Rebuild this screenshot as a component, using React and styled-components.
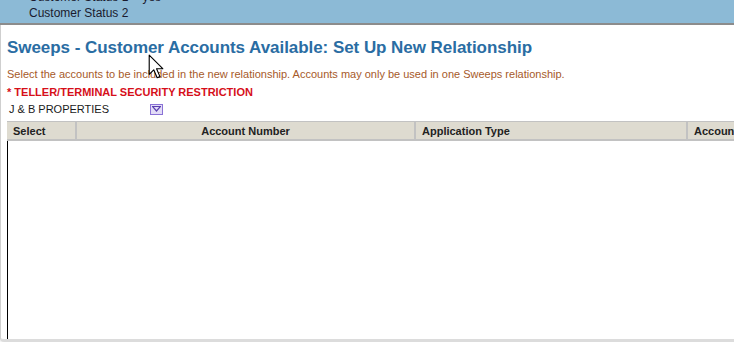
import styled, { createGlobalStyle } from 'styled-components';

const Global = createGlobalStyle`
  html, body { margin: 0; padding: 0; background: #f4f4f4; }
  body { font-family: Arial, "Liberation Sans", sans-serif; overflow: hidden; }
`;

const StatusBar = styled.div`
  height: 23px;
  background: #8cbad6;
  border-bottom: 2px solid #8c8c8c;
  overflow: hidden;
`;

const StatusList = styled.div`
  margin-top: -11px;
`;

const StatusRow = styled.div`
  display: flex;
  height: 16px;
  align-items: center;
  padding-left: 29px;
  font-size: 12px;
  color: #1a1a2e;
`;

const StatusValue = styled.span`
  margin-left: 14px;
`;

const Panel = styled.div`
  background: #fff;
  border-left: 1px solid #cfcfcf;
  border-bottom: 3px solid #dcdcdc;
  border-bottom-left-radius: 4px;
  height: 317px;
  padding: 12px 0 0 6px;
  box-sizing: border-box;
  overflow: hidden;
  position: relative;
`;

const Title = styled.h1`
  margin: 0;
  font-size: 17px;
  font-weight: bold;
  color: #2a6da3;
  line-height: 21px;
  letter-spacing: -0.05px;
`;

const Note = styled.p`
  margin: 10px 0 0;
  font-size: 11px;
  line-height: 13px;
  color: #a65a2a;
`;

const Restriction = styled.div`
  margin-top: 4px;
  font-size: 11px;
  line-height: 14px;
  font-weight: bold;
  color: #d60f1a;
`;

const PickerRow = styled.div`
  display: flex;
  align-items: center;
  height: 16px;
  margin-top: 2px;
  padding-left: 2px;
  font-size: 11px;
  color: #1a1a1a;
`;

const PickerLabel = styled.span`
  width: 141px;
`;

const DropButton = styled.span`
  display: inline-flex;
  align-items: center;
  justify-content: center;
  width: 13px;
  height: 11px;
  background: #e2dcf6;
  border: 1px solid #8a72d6;
  box-sizing: border-box;
`;

const Table = styled.div`
  margin-top: 4px;
  width: 760px;
`;

const HeadRow = styled.div`
  display: grid;
  grid-template-columns: 68px 339px 272px 1fr;
  height: 20px;
  background: #dedbd0;
  border-top: 1px solid #c2c2c2;
  border-bottom: 2px solid #c2c2c2;
  box-sizing: border-box;
`;

const HeadCell = styled.div`
  display: flex;
  align-items: center;
  justify-content: ${p => (p.center ? 'center' : 'flex-start')};
  padding-left: ${p => (p.center ? '0' : '6px')};
  border-left: ${p => (p.first ? 'none' : '2px solid #c2c2c2')};
  font-size: 11px;
  font-weight: bold;
  color: #222;
  white-space: nowrap;
`;

const Body = styled.div`
  height: 200px;
  border-left: 1px solid #000;
`;

const Cursor = styled.svg`
  position: absolute;
  left: 147px;
  top: 29px;
`;

const statuses = [
  { label: 'Customer Status 1', value: 'yes' },
  { label: 'Customer Status 2', value: '' },
];

const columns = [
  { name: 'Select', first: true },
  { name: 'Account Number', center: true },
  { name: 'Application Type' },
  { name: 'Account Status' },
];

export default function App() {
  return (
    <>
      <Global />
      <StatusBar>
        <StatusList>
          {statuses.map(s => (
            <StatusRow key={s.label}>
              {s.label}
              {s.value && <StatusValue>{s.value}</StatusValue>}
            </StatusRow>
          ))}
        </StatusList>
      </StatusBar>
      <Panel>
        <Title>Sweeps - Customer Accounts Available: Set Up New Relationship</Title>
        <Note>
          Select the accounts to be included in the new relationship. Accounts may only be used in one Sweeps
          relationship.
        </Note>
        <Restriction>* TELLER/TERMINAL SECURITY RESTRICTION</Restriction>
        <PickerRow>
          <PickerLabel>J &amp; B PROPERTIES</PickerLabel>
          <DropButton>
            <svg width="9" height="6" viewBox="0 0 9 6">
              <path d="M0.5 0.5 H8.5 L4.5 5 Z" fill="none" stroke="#5a3fb0" strokeWidth="1.2" />
            </svg>
          </DropButton>
        </PickerRow>
        <Table>
          <HeadRow>
            {columns.map(c => (
              <HeadCell key={c.name} first={c.first} center={c.center}>
                {c.name}
              </HeadCell>
            ))}
          </HeadRow>
          <Body />
        </Table>
        <Cursor width="16" height="26" viewBox="0 0 14 23">
          <path d="M1 1 V18 L5 14 L8 21 L10.5 20 L7.5 13 H13 Z" fill="#fff" stroke="#000" strokeWidth="1" strokeLinejoin="round" />
        </Cursor>
      </Panel>
    </>
  );
}
